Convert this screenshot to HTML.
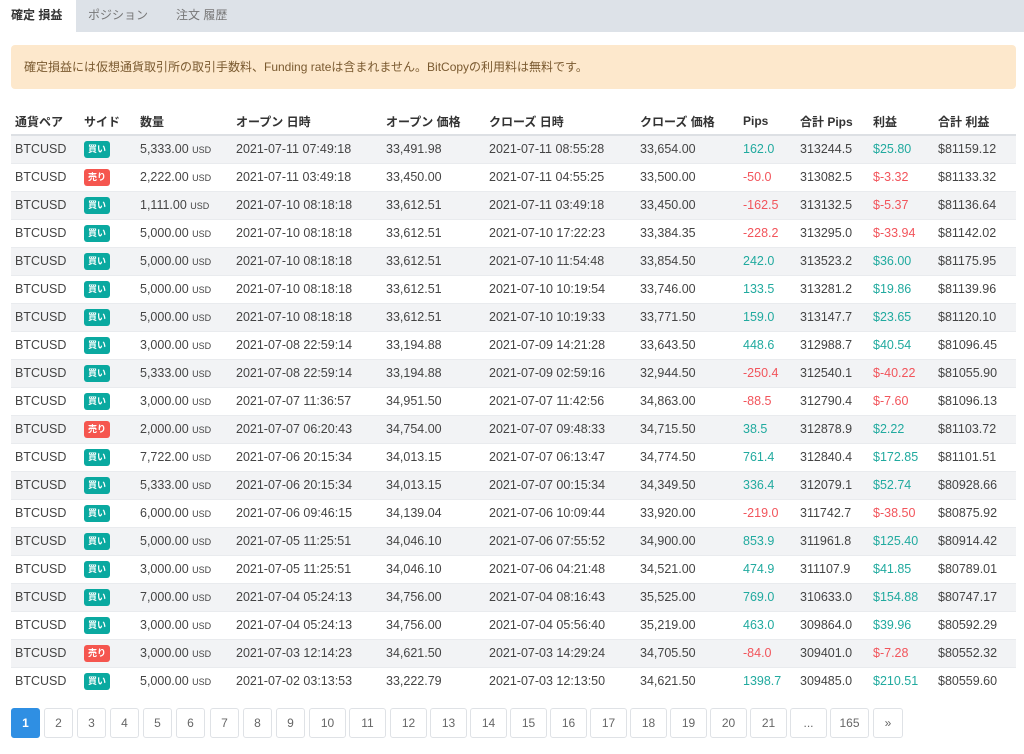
<!DOCTYPE html>
<html><head><meta charset="utf-8"><style>
*{margin:0;padding:0;box-sizing:border-box}
body{width:1024px;height:754px;background:#fff;font-family:"Liberation Sans","Noto Sans CJK JP",sans-serif;font-size:12px;color:#444;position:relative;overflow:hidden}
.tabs{position:absolute;left:0;top:0;width:1024px;height:32px;background:#dde2e8}
.tab{position:absolute;top:0;height:32px;line-height:31px;font-size:12px;color:#777}
.tab.a{background:#fff;color:#333;font-weight:bold;left:0;width:76px;padding-left:11px}
.alert{position:absolute;left:11px;top:45px;width:1005px;height:44px;background:#fde8cc;border-radius:4px;color:#7a5a30;line-height:44px;padding-left:13px;font-size:12px}
table{position:absolute;left:11px;top:108px;border-collapse:collapse;table-layout:fixed;width:1005px}
th{text-align:left;font-weight:bold;color:#333;height:27px;padding-left:4px;border-bottom:2px solid #dde0e4;white-space:nowrap;vertical-align:middle}
td{height:28px;padding-left:4px;border-top:1px solid #e9ebee;white-space:nowrap;color:#444;font-size:12.5px}
tr:nth-child(even) td{background:#f2f3f5}
.u{font-size:9px}
.b{display:inline-block;color:#fff;font-size:9px;font-weight:bold;padding:0 4px;height:17px;line-height:17px;border-radius:3px;background:#0aa9a0;vertical-align:middle}
.s{background:#f5564f}
.p{color:#21aa9f}.n{color:#f2545b}
.pg{position:absolute;top:708px;height:30px;border:1px solid #dfe2e6;border-radius:3px;text-align:center;line-height:28px;color:#666;font-size:12px}
.pg.on{background:#2f8fe3;color:#fff;border-color:#2f8fe3;font-weight:bold}
</style></head><body>
<div class="tabs"><div class="tab a">確定 損益</div><div class="tab" style="left:88px">ポジション</div><div class="tab" style="left:176px">注文 履歴</div></div>
<div class="alert">確定損益には仮想通貨取引所の取引手数料、Funding rateは含まれません。BitCopyの利用料は無料です。</div>
<table>
<colgroup><col style="width:69px"><col style="width:56px"><col style="width:96px"><col style="width:150px"><col style="width:103px"><col style="width:151px"><col style="width:103px"><col style="width:57px"><col style="width:73px"><col style="width:65px"><col style="width:82px"></colgroup>
<tr><th>通貨ペア</th><th>サイド</th><th>数量</th><th>オープン 日時</th><th>オープン 価格</th><th>クローズ 日時</th><th>クローズ 価格</th><th>Pips</th><th>合計 Pips</th><th>利益</th><th>合計 利益</th></tr>
<tr><td>BTCUSD</td><td><span class="b">買い</span></td><td>5,333.00 <span class="u">USD</span></td><td>2021-07-11 07:49:18</td><td>33,491.98</td><td>2021-07-11 08:55:28</td><td>33,654.00</td><td class="p">162.0</td><td>313244.5</td><td class="p">$25.80</td><td>$81159.12</td></tr>
<tr><td>BTCUSD</td><td><span class="b s">売り</span></td><td>2,222.00 <span class="u">USD</span></td><td>2021-07-11 03:49:18</td><td>33,450.00</td><td>2021-07-11 04:55:25</td><td>33,500.00</td><td class="n">-50.0</td><td>313082.5</td><td class="n">$-3.32</td><td>$81133.32</td></tr>
<tr><td>BTCUSD</td><td><span class="b">買い</span></td><td>1,111.00 <span class="u">USD</span></td><td>2021-07-10 08:18:18</td><td>33,612.51</td><td>2021-07-11 03:49:18</td><td>33,450.00</td><td class="n">-162.5</td><td>313132.5</td><td class="n">$-5.37</td><td>$81136.64</td></tr>
<tr><td>BTCUSD</td><td><span class="b">買い</span></td><td>5,000.00 <span class="u">USD</span></td><td>2021-07-10 08:18:18</td><td>33,612.51</td><td>2021-07-10 17:22:23</td><td>33,384.35</td><td class="n">-228.2</td><td>313295.0</td><td class="n">$-33.94</td><td>$81142.02</td></tr>
<tr><td>BTCUSD</td><td><span class="b">買い</span></td><td>5,000.00 <span class="u">USD</span></td><td>2021-07-10 08:18:18</td><td>33,612.51</td><td>2021-07-10 11:54:48</td><td>33,854.50</td><td class="p">242.0</td><td>313523.2</td><td class="p">$36.00</td><td>$81175.95</td></tr>
<tr><td>BTCUSD</td><td><span class="b">買い</span></td><td>5,000.00 <span class="u">USD</span></td><td>2021-07-10 08:18:18</td><td>33,612.51</td><td>2021-07-10 10:19:54</td><td>33,746.00</td><td class="p">133.5</td><td>313281.2</td><td class="p">$19.86</td><td>$81139.96</td></tr>
<tr><td>BTCUSD</td><td><span class="b">買い</span></td><td>5,000.00 <span class="u">USD</span></td><td>2021-07-10 08:18:18</td><td>33,612.51</td><td>2021-07-10 10:19:33</td><td>33,771.50</td><td class="p">159.0</td><td>313147.7</td><td class="p">$23.65</td><td>$81120.10</td></tr>
<tr><td>BTCUSD</td><td><span class="b">買い</span></td><td>3,000.00 <span class="u">USD</span></td><td>2021-07-08 22:59:14</td><td>33,194.88</td><td>2021-07-09 14:21:28</td><td>33,643.50</td><td class="p">448.6</td><td>312988.7</td><td class="p">$40.54</td><td>$81096.45</td></tr>
<tr><td>BTCUSD</td><td><span class="b">買い</span></td><td>5,333.00 <span class="u">USD</span></td><td>2021-07-08 22:59:14</td><td>33,194.88</td><td>2021-07-09 02:59:16</td><td>32,944.50</td><td class="n">-250.4</td><td>312540.1</td><td class="n">$-40.22</td><td>$81055.90</td></tr>
<tr><td>BTCUSD</td><td><span class="b">買い</span></td><td>3,000.00 <span class="u">USD</span></td><td>2021-07-07 11:36:57</td><td>34,951.50</td><td>2021-07-07 11:42:56</td><td>34,863.00</td><td class="n">-88.5</td><td>312790.4</td><td class="n">$-7.60</td><td>$81096.13</td></tr>
<tr><td>BTCUSD</td><td><span class="b s">売り</span></td><td>2,000.00 <span class="u">USD</span></td><td>2021-07-07 06:20:43</td><td>34,754.00</td><td>2021-07-07 09:48:33</td><td>34,715.50</td><td class="p">38.5</td><td>312878.9</td><td class="p">$2.22</td><td>$81103.72</td></tr>
<tr><td>BTCUSD</td><td><span class="b">買い</span></td><td>7,722.00 <span class="u">USD</span></td><td>2021-07-06 20:15:34</td><td>34,013.15</td><td>2021-07-07 06:13:47</td><td>34,774.50</td><td class="p">761.4</td><td>312840.4</td><td class="p">$172.85</td><td>$81101.51</td></tr>
<tr><td>BTCUSD</td><td><span class="b">買い</span></td><td>5,333.00 <span class="u">USD</span></td><td>2021-07-06 20:15:34</td><td>34,013.15</td><td>2021-07-07 00:15:34</td><td>34,349.50</td><td class="p">336.4</td><td>312079.1</td><td class="p">$52.74</td><td>$80928.66</td></tr>
<tr><td>BTCUSD</td><td><span class="b">買い</span></td><td>6,000.00 <span class="u">USD</span></td><td>2021-07-06 09:46:15</td><td>34,139.04</td><td>2021-07-06 10:09:44</td><td>33,920.00</td><td class="n">-219.0</td><td>311742.7</td><td class="n">$-38.50</td><td>$80875.92</td></tr>
<tr><td>BTCUSD</td><td><span class="b">買い</span></td><td>5,000.00 <span class="u">USD</span></td><td>2021-07-05 11:25:51</td><td>34,046.10</td><td>2021-07-06 07:55:52</td><td>34,900.00</td><td class="p">853.9</td><td>311961.8</td><td class="p">$125.40</td><td>$80914.42</td></tr>
<tr><td>BTCUSD</td><td><span class="b">買い</span></td><td>3,000.00 <span class="u">USD</span></td><td>2021-07-05 11:25:51</td><td>34,046.10</td><td>2021-07-06 04:21:48</td><td>34,521.00</td><td class="p">474.9</td><td>311107.9</td><td class="p">$41.85</td><td>$80789.01</td></tr>
<tr><td>BTCUSD</td><td><span class="b">買い</span></td><td>7,000.00 <span class="u">USD</span></td><td>2021-07-04 05:24:13</td><td>34,756.00</td><td>2021-07-04 08:16:43</td><td>35,525.00</td><td class="p">769.0</td><td>310633.0</td><td class="p">$154.88</td><td>$80747.17</td></tr>
<tr><td>BTCUSD</td><td><span class="b">買い</span></td><td>3,000.00 <span class="u">USD</span></td><td>2021-07-04 05:24:13</td><td>34,756.00</td><td>2021-07-04 05:56:40</td><td>35,219.00</td><td class="p">463.0</td><td>309864.0</td><td class="p">$39.96</td><td>$80592.29</td></tr>
<tr><td>BTCUSD</td><td><span class="b s">売り</span></td><td>3,000.00 <span class="u">USD</span></td><td>2021-07-03 12:14:23</td><td>34,621.50</td><td>2021-07-03 14:29:24</td><td>34,705.50</td><td class="n">-84.0</td><td>309401.0</td><td class="n">$-7.28</td><td>$80552.32</td></tr>
<tr><td>BTCUSD</td><td><span class="b">買い</span></td><td>5,000.00 <span class="u">USD</span></td><td>2021-07-02 03:13:53</td><td>33,222.79</td><td>2021-07-03 12:13:50</td><td>34,621.50</td><td class="p">1398.7</td><td>309485.0</td><td class="p">$210.51</td><td>$80559.60</td></tr>
</table>
<div class="pg on" style="left:11px;width:29px">1</div>
<div class="pg" style="left:44px;width:29px">2</div>
<div class="pg" style="left:77px;width:29px">3</div>
<div class="pg" style="left:110px;width:29px">4</div>
<div class="pg" style="left:143px;width:29px">5</div>
<div class="pg" style="left:176px;width:29px">6</div>
<div class="pg" style="left:210px;width:29px">7</div>
<div class="pg" style="left:243px;width:29px">8</div>
<div class="pg" style="left:276px;width:29px">9</div>
<div class="pg" style="left:309px;width:37px">10</div>
<div class="pg" style="left:349px;width:37px">11</div>
<div class="pg" style="left:390px;width:37px">12</div>
<div class="pg" style="left:430px;width:37px">13</div>
<div class="pg" style="left:470px;width:37px">14</div>
<div class="pg" style="left:510px;width:37px">15</div>
<div class="pg" style="left:550px;width:37px">16</div>
<div class="pg" style="left:590px;width:37px">17</div>
<div class="pg" style="left:630px;width:37px">18</div>
<div class="pg" style="left:670px;width:37px">19</div>
<div class="pg" style="left:710px;width:37px">20</div>
<div class="pg" style="left:750px;width:37px">21</div>
<div class="pg" style="left:790px;width:37px">...</div>
<div class="pg" style="left:830px;width:39px">165</div>
<div class="pg" style="left:873px;width:30px">»</div>
</body></html>
